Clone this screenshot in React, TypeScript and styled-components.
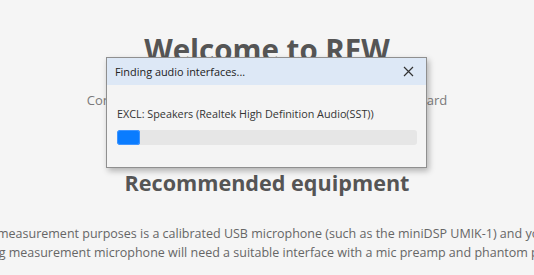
import React from "react";
import styled, { createGlobalStyle } from "styled-components";

const Global = createGlobalStyle`
  html, body {
    margin: 0;
    padding: 0;
    background: #f5f5f5;
    overflow: hidden;
  }
  body {
    width: 534px;
    height: 275px;
    font-family: "Open Sans", "Noto Sans", "Liberation Sans", sans-serif;
  }
`;

const Page = styled.div`
  position: relative;
  width: 534px;
  height: 275px;
  overflow: hidden;
  display: flex;
  flex-direction: column;
  align-items: center;
`;

const Title = styled.h1`
  margin: 30px 0 0;
  font-size: 29.5px;
  line-height: 40px;
  font-weight: 700;
  color: #555555;
  white-space: nowrap;
`;

const Subtitle = styled.p`
  margin: 21px 0 0;
  font-size: 13px;
  line-height: 18px;
  color: #7a7a7a;
  white-space: nowrap;
`;

const Section = styled.h2`
  margin: 59px 0 0;
  font-size: 21.6px;
  line-height: 30px;
  font-weight: 700;
  color: #555555;
  white-space: nowrap;
`;

const Paragraph = styled.div`
  align-self: stretch;
  margin-top: 26px;
  display: flex;
  flex-direction: column;
  font-size: 12.5px;
  line-height: 19px;
  color: #666666;
`;

const Line = styled.div<{ $shift: number }>`
  white-space: nowrap;
  margin-left: ${(p) => p.$shift}px;
`;

const Dialog = styled.div`
  position: absolute;
  left: 106px;
  top: 57px;
  width: 319px;
  height: 109px;
  border: 1px solid #8f8f8f;
  background: #f4f4f4;
  box-shadow: 2px 3px 6px rgba(0, 0, 0, 0.28);
  display: flex;
  flex-direction: column;
`;

const Header = styled.div`
  height: 27px;
  background: #dde8f6;
  display: flex;
  align-items: center;
  justify-content: space-between;
  padding: 0 12px 0 8px;
  font-size: 10.9px;
  color: #222222;
`;

const Close = styled.button`
  border: none;
  background: transparent;
  padding: 0;
  width: 12px;
  height: 12px;
  display: flex;
  align-items: center;
  justify-content: center;
  cursor: pointer;
`;

const Body = styled.div`
  display: flex;
  flex-direction: column;
  padding: 21px 9px 0 10px;
  gap: 8px;
`;

const Device = styled.div`
  font-size: 10.8px;
  line-height: 16px;
  color: #333333;
  white-space: nowrap;
`;

const Track = styled.div`
  height: 15px;
  border-radius: 3px;
  background: #e6e6e6;
  overflow: hidden;
`;

const Fill = styled.div`
  height: 100%;
  border-radius: 3px;
  background: #0a7cff;
  box-shadow: inset 0 0 0 1px #3f95ff;
`;

export default function App() {
  const progress = 0.075;
  return (
    <>
      <Global />
      <Page>
        <Title>Welcome to REW</Title>
        <Subtitle>Connect your microphone and speakers to your sound card</Subtitle>
        <Section>Recommended equipment</Section>
        <Paragraph>
          <Line $shift={-3}>
            measurement purposes is a calibrated USB microphone (such as the miniDSP UMIK-1) and your computer's audio output
          </Line>
          <Line $shift={-12}>
            log measurement microphone will need a suitable interface with a mic preamp and phantom power
          </Line>
        </Paragraph>
        <Dialog>
          <Header>
            <span>Finding audio interfaces...</span>
            <Close aria-label="Close">
              <svg width="11" height="11" viewBox="0 0 11 11">
                <path d="M1 1 L10 10 M10 1 L1 10" stroke="#333" strokeWidth="1.2" />
              </svg>
            </Close>
          </Header>
          <Body>
            <Device>EXCL: Speakers (Realtek High Definition Audio(SST))</Device>
            <Track>
              <Fill style={{ width: `${progress * 100}%` }} />
            </Track>
          </Body>
        </Dialog>
      </Page>
    </>
  );
}
